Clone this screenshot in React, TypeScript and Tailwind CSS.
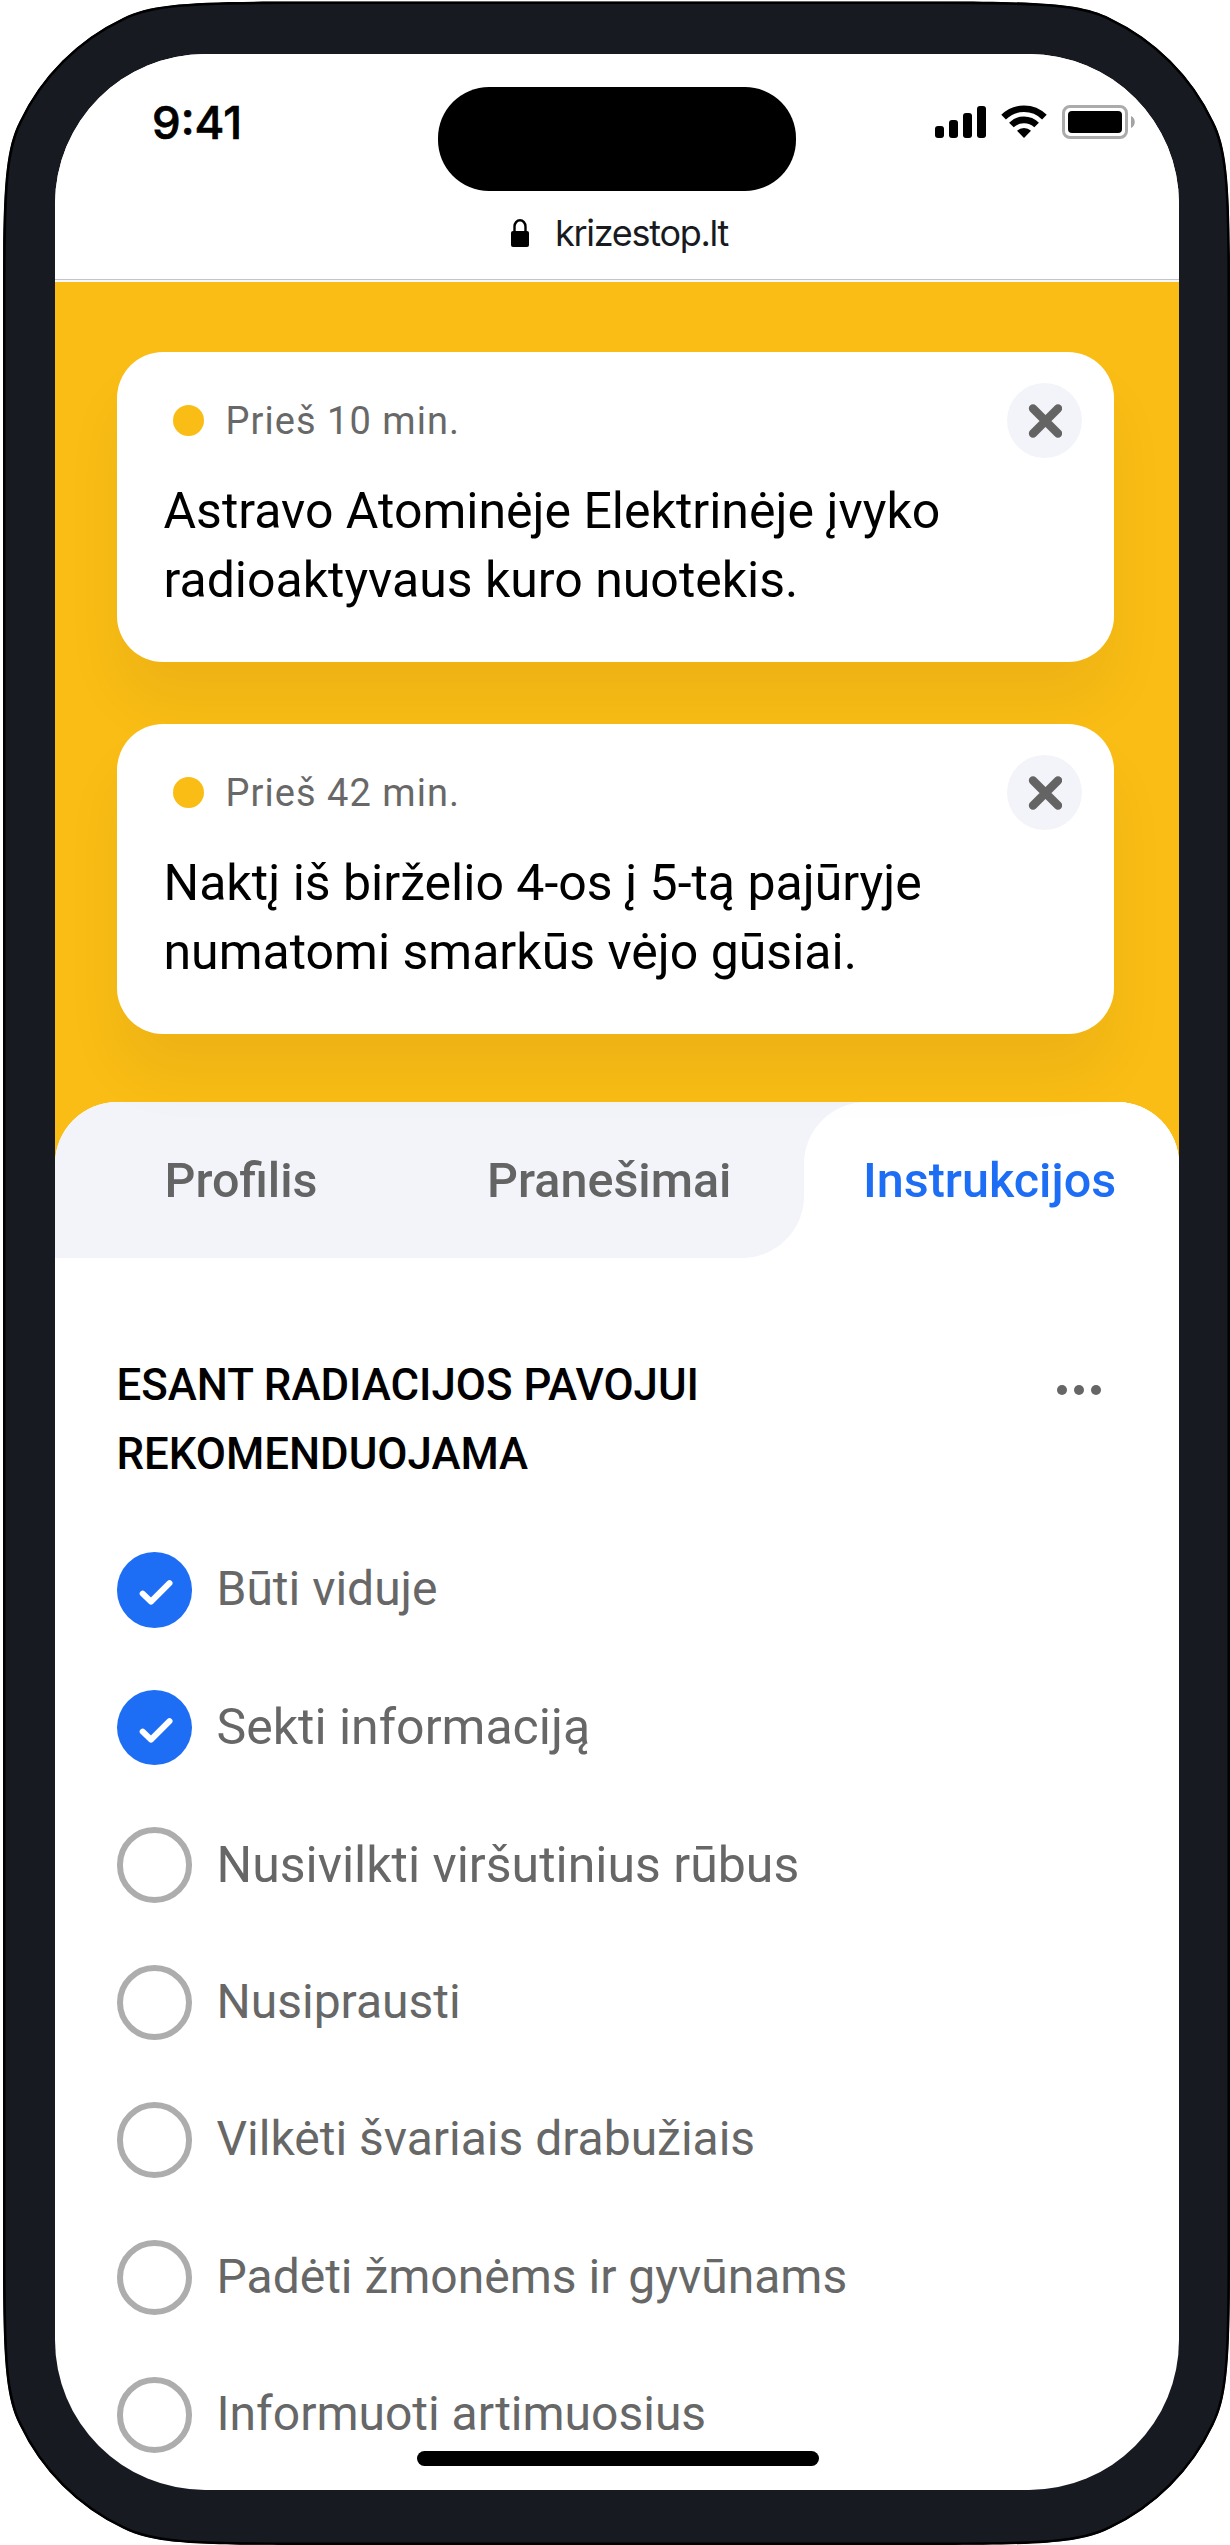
import React from "react";

const alerts = [
  { time: "Prieš 10 min.", lines: ["Astravo Atominėje Elektrinėje įvyko", "radioaktyvaus kuro nuotekis."] },
  { time: "Prieš 42 min.", lines: ["Naktį iš birželio 4-os į 5-tą pajūryje", "numatomi smarkūs vėjo gūsiai."] },
];

const tasks = [
  { label: "Būti viduje", done: true, size: "text-[48px] -mt-px" },
  { label: "Sekti informaciją", done: true, size: "text-[50px]" },
  { label: "Nusivilkti viršutinius rūbus", done: false, size: "text-[50px]" },
  { label: "Nusiprausti", done: false, size: "text-[48px]" },
  { label: "Vilkėti švariais drabužiais", done: false, size: "text-[48px] -mt-px" },
  { label: "Padėti žmonėms ir gyvūnams", done: false, size: "text-[48px] -mt-px" },
  { label: "Informuoti artimuosius", done: false, size: "text-[48px] -mt-px" },
];

const bodyPath =
  "M3 291.5C3 190 5 150 19.500 121.500A218 218 0 0 1 123 18C151.500 3.500 191.500 1.5 293 1.5H940C1041.500 1.5 1081.500 3.500 1110 18A218 218 0 0 1 1213.500 121.500C1228 150 1230 190 1230 291.5V2255C1230 2356.500 1228 2396.500 1213.500 2425A218 218 0 0 1 1110 2528.500C1081.500 2543 1041.500 2545 940 2545H293C191.500 2545 151.500 2543 123 2528.500A218 218 0 0 1 19.500 2425C5 2396.500 3 2356.500 3 2255Z";

/* Phone body with continuous-curvature corners and a thin black rim */
function Bezel() {
  return (
    <svg className="absolute inset-0 h-full w-full" viewBox="0 0 1230 2545" fill="none" aria-hidden="true">
      <clipPath id="body">
        <path d={bodyPath} />
      </clipPath>
      <path d={bodyPath} clipPath="url(#body)" fill="#181A22" stroke="#000" strokeWidth="5" />
    </svg>
  );
}

function Signal() {
  return (
    <svg width="51" height="34" viewBox="0 0 51 34" fill="#000">
      <rect x="0" y="21" width="9" height="12" rx="3" />
      <rect x="14" y="15" width="9" height="18" rx="3" />
      <rect x="28" y="8" width="9" height="25" rx="3" />
      <rect x="42" y="1" width="9" height="32" rx="3" />
    </svg>
  );
}

function Wifi() {
  return (
    <svg width="46" height="34" viewBox="0 0 46 34" fill="none">
      <path d="M2.600 12.200A29 29 0 0 1 43.400 12.200" stroke="#000" strokeWidth="6.600" />
      <path d="M10.400 20A18 18 0 0 1 35.600 20" stroke="#000" strokeWidth="6.600" />
      <path d="M16 25.800A10 10 0 0 1 30 25.800L23 33Z" fill="#000" />
    </svg>
  );
}

function Battery() {
  return (
    <svg width="74" height="34" viewBox="0 0 74 34" fill="none">
      <rect x="1.500" y="1.500" width="63" height="31" rx="6.500" stroke="#ABABAB" strokeWidth="3" />
      <rect x="6" y="6" width="54" height="22" rx="4" fill="#000" />
      <path d="M69 11C74 13 74 21 69 23Z" fill="#A3A3A3" />
    </svg>
  );
}

function StatusBar() {
  return (
    <div className="grid h-[104px] grid-cols-[383px_358px_383px] font-['Inter',sans-serif]">
      <div className="flex h-[70px] items-center pl-[97px] pt-[2px] text-[45.5px] font-medium leading-none text-black [-webkit-text-stroke:0.7px_black]">
        9:41
      </div>
      <div className="rounded-[51px] bg-black" />
      <div className="flex h-[70px] items-center gap-[15px] pl-[139px]">
        <Signal />
        <Wifi />
        <Battery />
      </div>
    </div>
  );
}

function AddressBar() {
  return (
    <div className="flex h-[84px] items-center gap-[26px] pl-[456px]">
      <svg width="18" height="28" viewBox="0 0 18 28" fill="none">
        <path d="M3.500 13V7.500A5.500 6.200 0 0 1 14.500 7.500V13" stroke="#000" strokeWidth="2.400" />
        <rect x="0" y="12" width="18" height="16" rx="2" fill="#000" />
      </svg>
      <span className="font-['Inter',sans-serif] text-[36px] leading-none tracking-[-1.28px] text-[#181A22]">krizestop.lt</span>
    </div>
  );
}

function AlertCard({ time, lines }: { time: string; lines: string[] }) {
  return (
    <article className="relative h-[310px] rounded-[46px] bg-white pl-[47px] pr-[31.5px] pt-[31px] shadow-[0_42px_60px_rgba(0,0,0,0.05)]">
      <header className="flex h-[75px] items-center">
        <span className="ml-[9px] size-[31.5px] rounded-full bg-[#FABD15]" />
        <time className="ml-[21.5px] text-[38px] leading-none tracking-[1.05px] text-[#686868]">{time}</time>
        <button className="ml-auto flex size-[75px] items-center justify-center rounded-full bg-[#F3F4F9]" aria-label="Uždaryti">
          <svg width="34" height="34" viewBox="0 0 34 34" fill="none" stroke="#646464" strokeWidth="8.400" strokeLinecap="round">
            <path d="M5 4.500L30 29.500M30 4.500L5 29.500" />
          </svg>
        </button>
      </header>
      <p className="mt-[19px] whitespace-nowrap text-[50px] leading-[69px] text-black">
        {lines[0]}
        <br />
        {lines[1]}
      </p>
    </article>
  );
}

function Tabs() {
  return (
    <nav className="grid h-[156px] grid-cols-[749px_1fr] overflow-hidden rounded-t-[62px] bg-white text-[48.5px] font-medium leading-none">
      <div className="flex items-center gap-[169.5px] rounded-br-[62px] bg-[#F3F4F9] pl-[109.5px] pt-[2px] text-[#646464]">
        <span>Profilis</span>
        <span>Pranešimai</span>
      </div>
      <div className="bg-[linear-gradient(to_right,#F3F4F9_62px,#fff_62px)] bg-[length:100%_70px] bg-no-repeat">
        <div className="flex h-full items-center rounded-tl-[62px] bg-white pl-[59px] pt-[2px] text-[#1D6EF5]">Instrukcijos</div>
      </div>
    </nav>
  );
}

function Mark({ done }: { done: boolean }) {
  return done ? (
    <span className="flex size-[75.5px] items-center justify-center rounded-full bg-[#1D6EF5]">
      <svg width="75.5" height="75.5" viewBox="0 0 75.5 75.5" fill="none" stroke="#fff" strokeWidth="6" strokeLinecap="round" strokeLinejoin="round">
        <path d="M25.700 41.700L34 49.700L52.500 31.200" />
      </svg>
    </span>
  ) : (
    <span className="size-[75.5px] rounded-full border-[6px] border-[#ADADAD]" />
  );
}

export default function App() {
  return (
    <main className="relative h-[2545px] w-[1230px] overflow-hidden bg-white pl-[55px] pt-[54px] font-['Roboto',sans-serif]">
      <Bezel />
      <div className="relative h-[2436px] w-[1124px] overflow-hidden rounded-[150px] bg-white">
        <div className="h-[225px] bg-white pt-[33px]">
          <StatusBar />
          <AddressBar />
        </div>
        <div className="h-[3px] border-t border-[#C4C5C6] bg-[#F6F8FC]" />
        <div className="bg-[#FABD15]">
          <section className="flex flex-col gap-[62px] pb-[68px] pl-[61.5px] pr-[65.5px] pt-[70px]">
            {alerts.map((a) => (
              <AlertCard key={a.time} {...a} />
            ))}
          </section>
          <Tabs />
        </div>
        <section className="pl-[61.5px] pr-[78px] pt-[92.5px]">
          <div className="flex items-start justify-between">
            <h1 className="text-[43.8px] font-medium leading-[69px] text-black">
              ESANT RADIACIJOS PAVOJUI
              <br />
              REKOMENDUOJAMA
            </h1>
            <div className="mt-[34.5px] flex gap-[7px]">
              <span className="size-[10px] rounded-full bg-[#666]" />
              <span className="size-[10px] rounded-full bg-[#666]" />
              <span className="size-[10px] rounded-full bg-[#666]" />
            </div>
          </div>
          <ul className="mt-[63.5px] flex flex-col gap-[62px]">
            {tasks.map((t) => (
              <li key={t.label} className="flex h-[75.5px] items-center gap-[24.5px]">
                <Mark done={t.done} />
                <span className={`${t.size} whitespace-nowrap leading-none text-[#666766]`}>{t.label}</span>
              </li>
            ))}
          </ul>
        </section>
        <div className="absolute bottom-[24px] left-[362px] h-[15px] w-[402px] rounded-full bg-black" />
      </div>
    </main>
  );
}
